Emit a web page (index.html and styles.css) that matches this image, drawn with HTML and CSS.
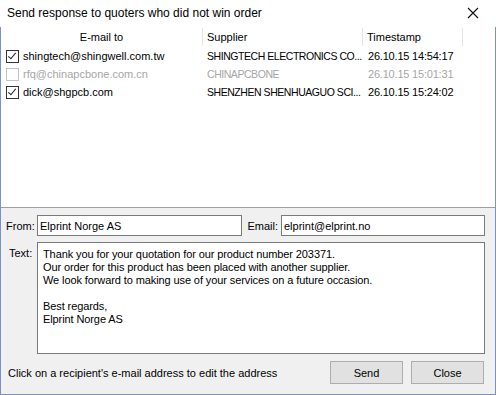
FILE: index.html
```html
<!DOCTYPE html>
<html>
<head>
<meta charset="utf-8">
<link rel="stylesheet" href="styles.css">
</head>
<body>
<div class="window">
  <div class="titlebar">
    <span class="title">Send response to quoters who did not win order</span>
    <svg class="close" width="12" height="12" viewBox="0 0 12 12"><path d="M1 1 L11 11 M11 1 L1 11" stroke="#111" stroke-width="1.1" fill="none"/></svg>
  </div>
  <div class="client">
    <div class="list">
      <div class="row head">
        <div class="c1 center">E-mail to</div>
        <div class="c2">Supplier</div>
        <div class="c3">Timestamp</div>
        <div class="c4"></div>
      </div>
      <div class="row">
        <div class="c1"><span class="cb checked"></span>shingtech@shingwell.com.tw</div>
        <div class="c2">SHINGTECH ELECTRONICS CO...</div>
        <div class="c3">26.10.15 14:54:17</div>
      </div>
      <div class="row disabled">
        <div class="c1"><span class="cb"></span>rfq@chinapcbone.com.cn</div>
        <div class="c2">CHINAPCBONE</div>
        <div class="c3">26.10.15 15:01:31</div>
      </div>
      <div class="row">
        <div class="c1"><span class="cb checked"></span>dick@shgpcb.com</div>
        <div class="c2">SHENZHEN SHENHUAGUO SCI...</div>
        <div class="c3">26.10.15 15:24:02</div>
      </div>
    </div>
    <div class="form">
      <div class="line1">
        <label class="lbl from">From:</label>
        <div class="field f-from">Elprint Norge AS</div>
        <label class="lbl email">Email:</label>
        <div class="field f-email">elprint@elprint.no</div>
      </div>
      <div class="line2">
        <label class="lbl text">Text:</label>
        <div class="textarea">Thank you for your quotation for our product number 203371.
Our order for this product has been placed with another supplier.
We look forward to making use of your services on a future occasion.

Best regards,
Elprint Norge AS</div>
      </div>
      <div class="footer">
        <span class="hint">Click on a recipient's e-mail address to edit the address</span>
        <button class="btn send">Send</button>
        <button class="btn closebtn">Close</button>
      </div>
    </div>
  </div>
</div>
</body>
</html>
```
FILE: styles.css
```css
html, body {
  margin: 0;
  padding: 0;
  background: #ffffff;
}
.window {
  width: 496px;
  height: 395px;
  display: flex;
  flex-direction: column;
  font-family: "Liberation Sans", Arial, sans-serif;
  font-size: 11px;
  color: #000;
}
.titlebar {
  height: 27px;
  background: #ffffff;
  display: flex;
  align-items: center;
  justify-content: space-between;
  padding: 0 17px 1px 7px;
  box-sizing: border-box;
}
.title {
  font-size: 12px;
  color: #000;
}
.close {
  display: block;
}
.client {
  flex: 1;
  display: flex;
  flex-direction: column;
  border: 1px solid #7b93b6;
  border-top: none;
  background: #f0f0f0;
}
.list {
  height: 181px;
  background: #fff;
  border-bottom: 1px solid #a0a0a0;
  box-sizing: border-box;
}
.row {
  display: flex;
  height: 18px;
  align-items: center;
  white-space: nowrap;
}
.row.head {
  height: 20px;
}
.row.head > div {
  height: 18px;
  display: flex;
  align-items: center;
  border-right: 1px solid #e5e5e5;
  box-sizing: border-box;
}
.row.head .c1 {
  justify-content: center;
  padding-left: 0;
}
.row.head .c4 {
  border-right: none;
}
.c1 {
  width: 202px;
  padding-left: 5px;
  box-sizing: border-box;
  display: flex;
  align-items: center;
}
.c2 {
  width: 161px;
  padding-left: 4px;
  box-sizing: border-box;
  overflow: hidden;
  font-size: 10.5px;
  letter-spacing: -0.45px;
}
.row.head .c2 {
  letter-spacing: 0;
  font-size: 11px;
  width: 160px;
}
.c3 {
  width: 99px;
  padding-left: 4px;
  box-sizing: border-box;
  letter-spacing: -0.2px;
}
.row.head .c3 {
  letter-spacing: 0;
  width: 100px;
}
.c4 {
  flex: 1;
}
.cb {
  width: 13px;
  height: 13px;
  border: 1px solid #333;
  box-sizing: border-box;
  background: #fff;
  margin-right: 4px;
  position: relative;
  flex: none;
}
.cb.checked::after {
  content: "";
  position: absolute;
  left: 3px;
  top: 0px;
  width: 3px;
  height: 7px;
  border: solid #222;
  border-width: 0 1.5px 1.5px 0;
  transform: rotate(40deg);
}
.row.disabled {
  color: #a6a6a6;
}
.row.disabled .cb {
  border-color: #c2c2c2;
}
.form {
  flex: 1;
  display: flex;
  flex-direction: column;
  padding: 7px 0 0 0;
}
.line1 {
  display: flex;
  align-items: center;
  height: 21px;
}
.lbl {
  color: #000;
}
.lbl.from {
  width: 36px;
  padding-left: 5px;
  box-sizing: border-box;
}
.field {
  height: 21px;
  border: 1px solid #7a7a7a;
  background: #fff;
  box-sizing: border-box;
  padding: 0 2px;
  display: flex;
  align-items: center;
}
.f-from {
  width: 205px;
}
.lbl.email {
  width: 39px;
  text-align: right;
  padding-right: 3px;
  box-sizing: border-box;
}
.f-email {
  width: 204px;
}
.line2 {
  display: flex;
  margin-top: 6px;
}
.lbl.text {
  width: 36px;
  padding-left: 8px;
  padding-top: 5px;
  box-sizing: border-box;
}
.textarea {
  width: 448px;
  height: 112px;
  border: 1px solid #7a7a7a;
  background: #fff;
  box-sizing: border-box;
  white-space: pre-line;
  padding: 5px 5px 3px;
  line-height: 13px;
  font-size: 11px;
  letter-spacing: -0.1px;
}
.footer {
  display: flex;
  align-items: center;
  margin-top: 7px;
  height: 23px;
}
.hint {
  padding-left: 7px;
  flex: 1;
}
.btn {
  width: 73px;
  height: 23px;
  background: #e1e1e1;
  border: 1px solid #adadad;
  font-family: inherit;
  font-size: 11px;
  color: #000;
  padding: 0;
  margin: 0;
}
.send {
  margin-right: 8px;
}
.closebtn {
  margin-right: 11px;
}
```
